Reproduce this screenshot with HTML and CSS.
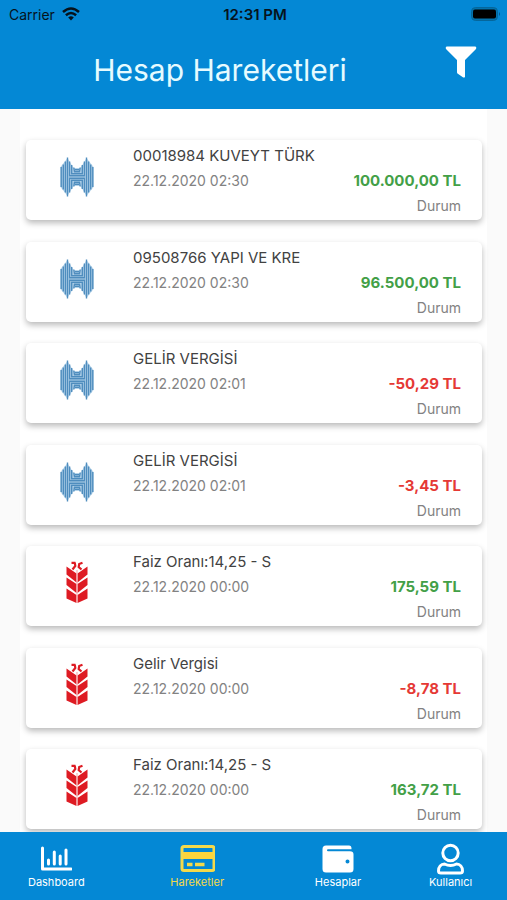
FILE: index.html
```html
<!DOCTYPE html>
<html lang="tr">
<head>
<meta charset="utf-8">
<meta name="viewport" content="width=device-width, initial-scale=1">
<title>Hesap Hareketleri</title>
<link rel="stylesheet" href="styles.css">
</head>
<body>
<svg class="defs" aria-hidden="true">
  <symbol id="halk" viewBox="0 0 34 40">
    <path d="M0.500 10L7.500 1L13.500 11H20.500L26.500 1L33.500 10V30L26.500 39L20.500 29H13.500L7.500 39L0.500 30Z" fill="#b4d3ea"/>
    <g fill="none" stroke="#4f8dbe" stroke-width="1.4">
      <path d="M1.200 10V30M3.300 7.500V32.500M5.400 4.500V35.500M7.500 0.500V39.500M32.800 10V30M30.700 7.500V32.500M28.600 4.500V35.500M26.500 0.500V39.500"/>
      <path d="M9.600 4.500V18.800H24.400V4.500M11.700 8V16.800H22.300V8M13.800 10.500L14.500 14.800H19.500L20.200 10.500M15 12.700H19"/>
      <path d="M9.600 35.500V21.200H24.400V35.500M11.700 32V23.200H22.300V32M13.800 29.500L14.500 25.200H19.500L20.200 29.500M15 27.300H19"/>
    </g>
  </symbol>
  <symbol id="ziraat" viewBox="0 0 22 42">
    <g fill="#de1b23">
      <path d="M0.500 5.500L10.500 12.500V21.500L0.500 13.500ZM0.500 16.500L10.500 23V32L0.500 24ZM0.500 27.500L10.500 34V42L0.500 37.500Z"/>
      <path d="M21.500 5.500L11.500 12.500V21.500L21.500 13.500ZM21.500 16.500L11.500 23V32L21.500 24ZM21.500 27.500L11.500 34V42L21.500 37.500Z"/>
    </g>
    <path d="M5.500 1.800H9.500M8.800 2L9.300 5L6.500 8.500M16.500 1.800L13.200 3L12.700 6L15.500 8.500" fill="none" stroke="#de1b23" stroke-width="2.200"/>
    <path d="M11 9V42" stroke="#f3a3a5" stroke-width="1"/>
  </symbol>
</svg>
<div class="app">
  <header class="top">
    <div class="status">
      <span class="carrier">Carrier
        <svg width="18" height="14" viewBox="0 0 18 14" aria-hidden="true"><g fill="none" stroke="#06131c" stroke-width="2.500"><path d="M1 5Q9-2 17 5"/><path d="M3.900 8.300Q9 3.800 14.100 8.300"/></g><path d="M6.200 10.400Q9 8.100 11.800 10.400L9 13.500Z" fill="#06131c"/></svg>
      </span>
      <span class="time">12:31 PM</span>
      <svg class="battery" width="30" height="14" viewBox="0 0 30 14" aria-hidden="true"><rect x="0.500" y="0.500" width="26" height="13" rx="4" fill="#0372ac" stroke="#05669b"/><rect x="2" y="2.500" width="23" height="9" rx="2" fill="#000"/><path d="M28 5Q30 7 28 9Z" fill="#05558a"/></svg>
    </div>
    <div class="bar">
      <h1>Hesap Hareketleri</h1>
      <button class="filter" type="button" aria-label="Filtrele">
        <svg width="32" height="32" viewBox="0 0 32 32" aria-hidden="true"><path d="M1.500 0.500H30.500Q32 1.500 31 3L20 14V31Q19 32 17.500 31L12.500 27.500Q12 27 12 26V14L1 3Q0 1.500 1.500 0.500Z" fill="#fff"/></svg>
      </button>
    </div>
  </header>
  <main class="list">
    <article class="card"><svg class="logo halk" aria-hidden="true"><use href="#halk"/></svg><div class="info"><h2>00018984 KUVEYT TÜRK</h2><div class="row"><time>22.12.2020 02:30</time><strong class="in">100.000,00 TL</strong></div><p>Durum</p></div></article>
    <article class="card"><svg class="logo halk" aria-hidden="true"><use href="#halk"/></svg><div class="info"><h2>09508766 YAPI VE KRE</h2><div class="row"><time>22.12.2020 02:30</time><strong class="in">96.500,00 TL</strong></div><p>Durum</p></div></article>
    <article class="card"><svg class="logo halk" aria-hidden="true"><use href="#halk"/></svg><div class="info"><h2>GELİR VERGİSİ</h2><div class="row"><time>22.12.2020 02:01</time><strong class="out">-50,29 TL</strong></div><p>Durum</p></div></article>
    <article class="card"><svg class="logo halk" aria-hidden="true"><use href="#halk"/></svg><div class="info"><h2>GELİR VERGİSİ</h2><div class="row"><time>22.12.2020 02:01</time><strong class="out">-3,45 TL</strong></div><p>Durum</p></div></article>
    <article class="card"><svg class="logo ziraat" aria-hidden="true"><use href="#ziraat"/></svg><div class="info"><h2>Faiz Oranı:14,25 - S</h2><div class="row"><time>22.12.2020 00:00</time><strong class="in">175,59 TL</strong></div><p>Durum</p></div></article>
    <article class="card"><svg class="logo ziraat" aria-hidden="true"><use href="#ziraat"/></svg><div class="info"><h2>Gelir Vergisi</h2><div class="row"><time>22.12.2020 00:00</time><strong class="out">-8,78 TL</strong></div><p>Durum</p></div></article>
    <article class="card"><svg class="logo ziraat" aria-hidden="true"><use href="#ziraat"/></svg><div class="info"><h2>Faiz Oranı:14,25 - S</h2><div class="row"><time>22.12.2020 00:00</time><strong class="in">163,72 TL</strong></div><p>Durum</p></div></article>
  </main>
  <nav class="tabs">
    <a href="#dashboard"><svg width="32" height="32" viewBox="0 0 32 32" aria-hidden="true"><path d="M2.500 5V26H31" fill="none" stroke="#fff" stroke-width="3" stroke-linecap="round" stroke-linejoin="round"/><path d="M8.500 17V21M14.300 9V21M20.200 13V21M26 7V21" stroke="#fff" stroke-width="3" stroke-linecap="round"/></svg><span>Dashboard</span></a>
    <a href="#hareketler" class="active" aria-current="page"><svg width="36" height="32" viewBox="0 0 36 32" aria-hidden="true"><rect x="3" y="3.500" width="32" height="24" rx="2" fill="none" stroke="#f4d94b" stroke-width="3"/><path d="M4 9H34V16H4Z" fill="#fdd43c"/><path d="M8 21.500H13.500M16 21.500H25.500" stroke="#f4d94b" stroke-width="3.500"/></svg><span>Hareketler</span></a>
    <a href="#hesaplar"><svg width="32" height="32" viewBox="0 0 32 32" aria-hidden="true"><path fill="#fff" fill-rule="evenodd" d="M4 2.500H27Q29.500 2.500 29.500 5.500V6.300H6Q5 6.300 5 7.200T6 8.200H28Q31.500 8.200 31.500 11.500V26Q31.500 29.500 28 29.500H4Q0.500 29.500 0.500 26V6Q0.500 2.500 4 2.500ZM25.500 16.500A2 2 0 1 0 25.500 20.500A2 2 0 1 0 25.500 16.500Z"/></svg><span>Hesaplar</span></a>
    <a href="#kullanici"><svg width="32" height="32" viewBox="0 0 32 32" aria-hidden="true"><g fill="none" stroke="#fff" stroke-width="3"><circle cx="15.500" cy="10" r="7.700"/><path d="M9.500 21Q15.500 24 21.500 21C25 21 27.500 24 27.500 28Q27.500 30 25 30H6Q3.500 30 3.500 28C3.500 24 6 21 9.500 21Z" stroke-linejoin="round"/></g></svg><span>Kullanıcı</span></a>
  </nav>
</div>
</body>
</html>
```
FILE: styles.css
```css
* { box-sizing: border-box; }
body {
  margin: 0;
  background: #fafafa;
  font-family: Inter, "Liberation Sans", sans-serif;
  color: #424242;
}
h1, h2, p { margin: 0; font-weight: 400; }
.defs { position: absolute; width: 0; height: 0; }
.app {
  min-height: 100vh;
  display: flex;
  flex-direction: column;
}
.top {
  background: #0488d5;
  padding-bottom: 19px;
}
.status {
  display: grid;
  grid-template-columns: 1fr auto 1fr;
  align-items: center;
  height: 28px;
  padding: 0 6px 0 9px;
  font-size: 14px;
  color: #06131c;
}
.carrier { display: flex; align-items: center; gap: 7px; }
.time { font-size: 15px; font-weight: 600; }
.battery { justify-self: end; }
.bar {
  display: grid;
  grid-template-columns: 1fr 67px;
  align-items: start;
  padding-top: 18px;
}
.bar h1 {
  padding-top: 4px;
  font-size: 30px;
  line-height: 40px;
  text-align: center;
  color: #e6fbff;
}
.filter {
  justify-self: start;
  margin-left: 5px;
  padding: 0;
  border: 0;
  background: none;
}
.filter svg { display: block; }
.list {
  flex: 1;
  display: flex;
  flex-direction: column;
  justify-content: space-between;
  gap: 16px;
  margin: 0 20px;
  padding: 31px 5px 3px 6px;
  background: #fff;
}
.card {
  display: grid;
  grid-template-columns: 102px 1fr;
  min-height: 80px;
  padding: 4px 21px 2px 0;
  border-radius: 5px;
  background: #fff;
  box-shadow: 0 3px 6px rgba(0, 0, 0, 0.28);
}
.logo { justify-self: center; margin-top: 13px; }
.halk { width: 34px; height: 40px; }
.ziraat { width: 22px; height: 42px; margin-top: 11px; }
.info { padding-left: 5px; }
.info h2 { font-size: 15px; line-height: 24px; }
.row {
  display: flex;
  justify-content: space-between;
  align-items: center;
  line-height: 26px;
}
.row time, .info p { font-size: 14px; color: #828282; }
.row strong { font-size: 15px; font-weight: 700; }
.in { color: #43a047; }
.out { color: #e53935; }
.info p { text-align: right; line-height: 24px; }
.tabs {
  display: grid;
  grid-template-columns: 2fr 3fr 2fr 2fr;
  height: 68px;
  padding-top: 11px;
  background: #0488d5;
}
.tabs a {
  display: flex;
  flex-direction: column;
  align-items: center;
  font-size: 11px;
  line-height: 14px;
  color: #fff;
  text-decoration: none;
}
.tabs .active { color: #f4d94b; }
```
